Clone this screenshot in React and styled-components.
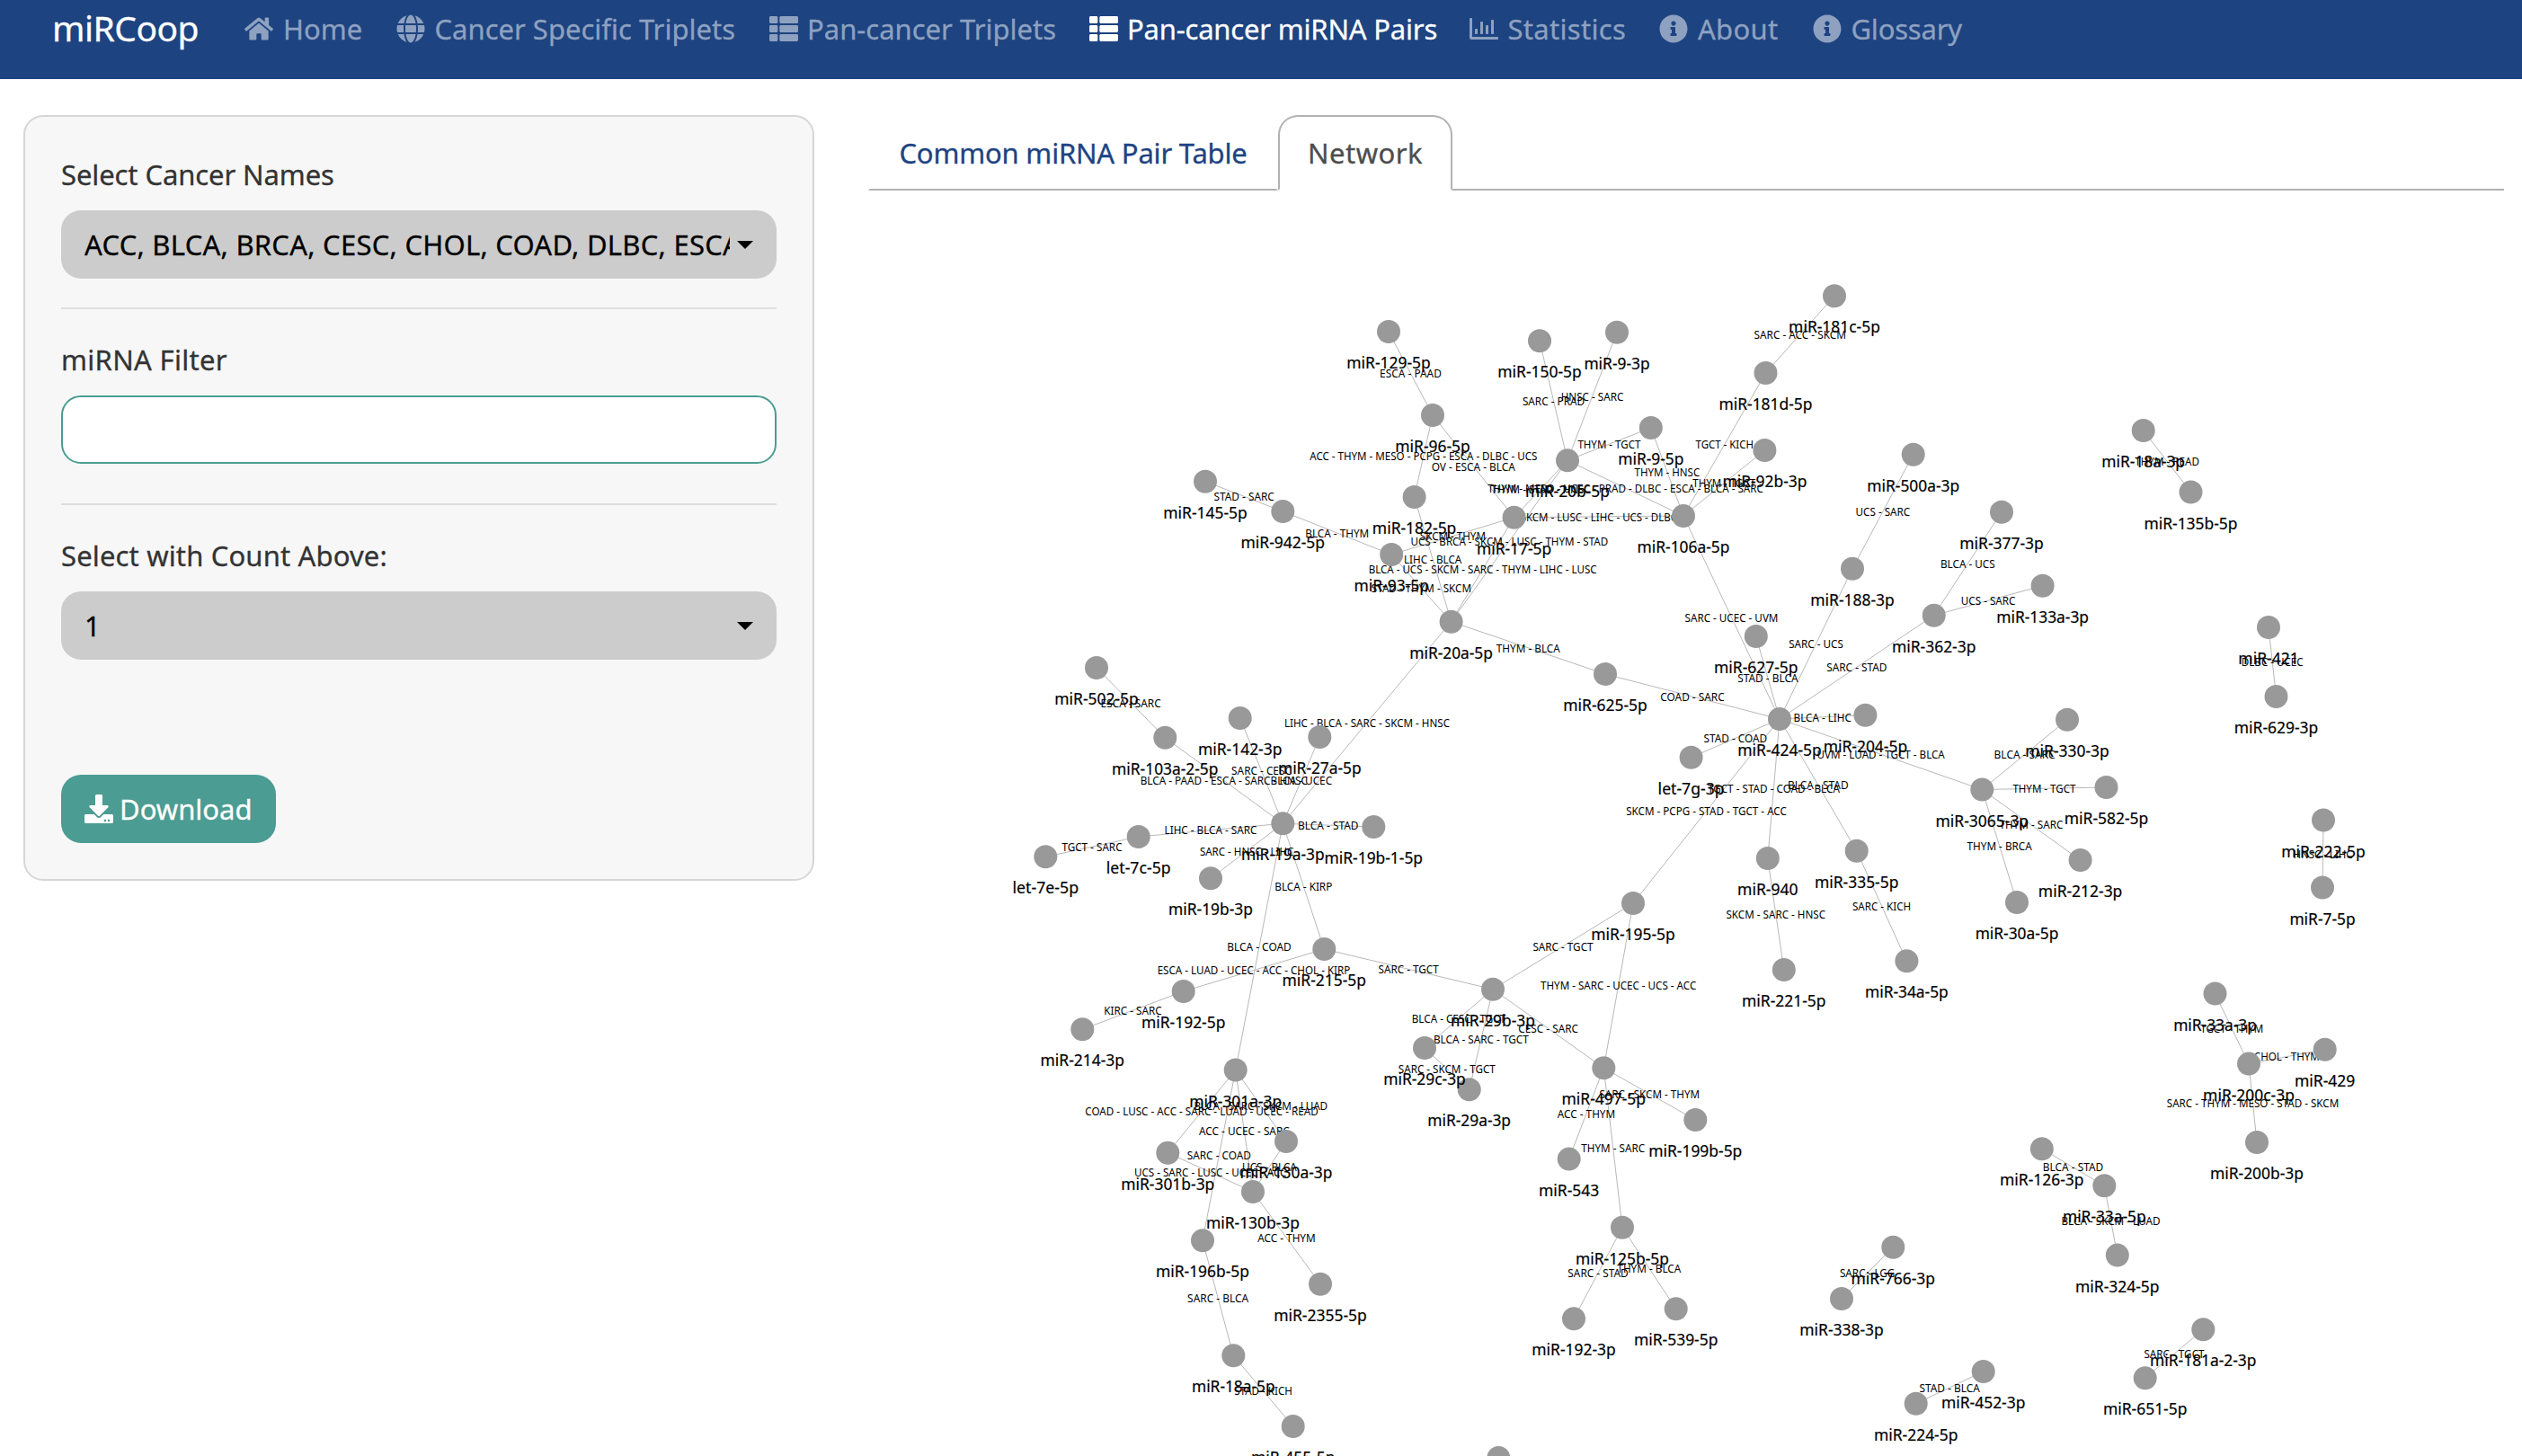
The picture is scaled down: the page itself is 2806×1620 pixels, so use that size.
import React from "react";
import styled, { createGlobalStyle } from "styled-components";
import { FaHome, FaGlobe, FaThList, FaRegChartBar, FaInfoCircle, FaDownload } from "react-icons/fa";

const GlobalStyle = createGlobalStyle`
  * { box-sizing: border-box; }
  body {
    margin: 0;
    overflow: hidden;
    background: #fff;
    color: #333;
    font-family: "Noto Sans", "Open Sans", sans-serif;
    font-size: 31px;
    line-height: 48px;
    -webkit-text-stroke: 0.3px currentColor;
  }
`;

const Page = styled.div`
  height: 1620px;
  overflow: hidden;
`;

const Navbar = styled.nav`
  display: flex;
  height: 88px;
  padding: 8px 0 0 58px;
  background: #1d4381;
  white-space: nowrap;
`;

const Brand = styled.span`
  width: 214px;
  height: 46px;
  line-height: 46px;
  font-size: 39px;
  letter-spacing: -0.5px;
  color: #fff;
`;

const NavItem = styled.a`
  display: flex;
  align-items: center;
  gap: ${(p) => p.$gap || 11}px;
  width: ${(p) => p.$width}px;
  height: 48px;
  color: ${(p) => (p.$active ? "#fff" : "#8ea1c0")};
  letter-spacing: ${(p) => p.$spacing || 0}px;

  svg {
    flex: none;
    width: auto;
    height: 32px;
  }
`;

const Content = styled.main`
  display: flex;
  align-items: flex-start;
  gap: 60px;
  padding: 40px 20px 0 26px;
`;

const Sidebar = styled.aside`
  display: flex;
  flex-direction: column;
  width: 880px;
  height: 852px;
  padding: 40px;
  border: 2px solid #d6d6d6;
  border-radius: 22px;
  background: #f7f7f7;
`;

const Label = styled.label`
  margin-bottom: 16px;
  letter-spacing: ${(p) => p.$spacing || 0}px;
  white-space: nowrap;
`;

const Picker = styled.button`
  display: flex;
  align-items: center;
  gap: 8px;
  height: 76px;
  padding: 0 26px;
  border: 0;
  border-radius: 22px;
  background: #ccc;
  color: #000;
  font: inherit;
  letter-spacing: 0.25px;
  text-align: left;
`;

const PickerValue = styled.span`
  flex: 1;
  min-width: 0;
  overflow: hidden;
  white-space: nowrap;
`;

const Caret = styled.i`
  border: 9px solid transparent;
  border-top-color: #000;
  border-bottom: 0;
`;

const Rule = styled.hr`
  width: 100%;
  height: 2px;
  margin: ${(p) => p.$top}px 0 32px;
  border: 0;
  background: #dedede;
`;

const TextField = styled.input`
  height: 76px;
  padding: 0 24px;
  border: 2px solid #4a9c92;
  border-radius: 22px;
  background: #fff;
  font: inherit;
  outline: none;
`;

const DownloadButton = styled.button`
  display: flex;
  align-items: center;
  align-self: flex-start;
  gap: 7px;
  width: 239px;
  height: 76px;
  margin-top: 128px;
  padding: 0 0 0 26px;
  border: 0;
  border-radius: 22px;
  background: #4b9c92;
  color: #fff;
  font: inherit;

  svg {
    flex: none;
    width: 32px;
    height: 32px;
  }
`;

const Panel = styled.section`
  display: flex;
  flex-direction: column;
  width: 1820px;
`;

const Tabs = styled.div`
  display: flex;
  height: 84px;
`;

const Tab = styled.a`
  display: flex;
  align-items: center;
  justify-content: center;
  width: ${(p) => p.$width}px;
  border: 2px solid ${(p) => (p.$active ? "#b2b2b2" : "transparent")};
  border-bottom-color: ${(p) => (p.$active ? "#fff" : "#b2b2b2")};
  border-radius: ${(p) => (p.$active ? "22px 22px 0 0" : "0")};
  color: ${(p) => (p.$active ? "#4d4d4d" : "#1d4381")};
  letter-spacing: ${(p) => p.$spacing || 0}px;
  white-space: nowrap;
`;

const TabsFill = styled.div`
  flex: 1;
  border-bottom: 2px solid #b2b2b2;
`;

const Graph = styled.svg`
  display: block;
  width: 1820px;
  height: 1408px;
  -webkit-text-stroke: 0;
`;

const EdgeLine = styled.line`
  stroke: #b8b8b8;
  stroke-width: 1;
`;

const EdgeText = styled.text`
  font-size: 11.7px;
  fill: #000;
  text-anchor: middle;
`;

const NodeDot = styled.circle`
  fill: #999;
`;

const NodeText = styled.text`
  font-size: 17.4px;
  fill: #000;
  stroke: #000;
  stroke-width: 0.2px;
  text-anchor: middle;
`;

const nodes = {
  "miR-129-5p": [1545, 369],
  "miR-150-5p": [1713, 379.3],
  "miR-9-3p": [1799, 369.7],
  "miR-96-5p": [1594, 462],
  "miR-20b-5p": [1744, 512.3],
  "miR-9-5p": [1836.8, 476],
  "miR-145-5p": [1341, 535.7],
  "miR-942-5p": [1427.3, 569],
  "miR-182-5p": [1573.6, 553],
  "miR-17-5p": [1684.6, 575.7],
  "miR-93-5p": [1548.2, 617],
  "miR-20a-5p": [1614.6, 691.7],
  "miR-625-5p": [1786, 750],
  "miR-181c-5p": [2041, 329.3],
  "miR-181d-5p": [1964.5, 415],
  "miR-92b-3p": [1963.4, 501],
  "miR-500a-3p": [2128.7, 505.7],
  "miR-106a-5p": [1873, 574],
  "miR-377-3p": [2227, 569.7],
  "miR-133a-3p": [2272.6, 651.7],
  "miR-188-3p": [2061, 632.7],
  "miR-362-3p": [2151.7, 684.7],
  "miR-627-5p": [1953.8, 708],
  "miR-18a-3p": [2384.7, 479],
  "miR-135b-5p": [2437.5, 547.5],
  "miR-421": [2524, 698],
  "miR-629-3p": [2532.5, 775],
  "miR-222-5p": [2585, 912.5],
  "miR-7-5p": [2584, 987.5],
  "miR-502-5p": [1220, 743],
  "miR-103a-2-5p": [1296.3, 820.8],
  "miR-142-3p": [1379.7, 799],
  "miR-27a-5p": [1468.3, 820],
  "miR-19a-3p": [1427.3, 916.3],
  "miR-19b-1-5p": [1528.3, 920],
  "let-7c-5p": [1266.7, 931],
  "let-7e-5p": [1163.3, 953.3],
  "miR-19b-3p": [1347, 977.3],
  "miR-215-5p": [1473.3, 1056],
  "miR-192-5p": [1316.7, 1103],
  "miR-214-3p": [1204.3, 1145.3],
  "miR-301a-3p": [1374.7, 1190.5],
  "miR-301b-3p": [1299.3, 1282.7],
  "miR-130a-3p": [1431, 1270],
  "miR-130b-3p": [1394, 1326],
  "miR-196b-5p": [1338, 1380.3],
  "miR-2355-5p": [1469, 1428.7],
  "miR-18a-5p": [1372.3, 1508.3],
  "miR-455-5p": [1438.7, 1587],
  "miR-424-5p": [1980, 800],
  "miR-204-5p": [2075.4, 795.7],
  "let-7g-3p": [1881.6, 842.7],
  "miR-330-3p": [2300, 800.7],
  "miR-582-5p": [2343.5, 876],
  "miR-3065-3p": [2205.3, 878.5],
  "miR-212-3p": [2314.6, 957],
  "miR-30a-5p": [2244, 1004],
  "miR-940": [1966.8, 955],
  "miR-335-5p": [2065.7, 946.7],
  "miR-34a-5p": [2121.4, 1069.3],
  "miR-221-5p": [1984.8, 1079],
  "miR-195-5p": [1817, 1005],
  "miR-29b-3p": [1661, 1100.7],
  "miR-29c-3p": [1585, 1166],
  "miR-29a-3p": [1634.7, 1212.3],
  "miR-497-5p": [1784.3, 1188.2],
  "miR-199b-5p": [1886.3, 1246],
  "miR-543": [1745.7, 1289.6],
  "miR-125b-5p": [1805, 1365.7],
  "miR-539-5p": [1864.7, 1456.3],
  "miR-192-3p": [1751, 1467.3],
  "miR-33a-3p": [2464.5, 1105.5],
  "miR-429": [2586.7, 1167.7],
  "miR-200c-3p": [2502, 1183.6],
  "miR-200b-3p": [2511, 1271],
  "miR-126-3p": [2271.8, 1278.2],
  "miR-33a-5p": [2341.3, 1319.3],
  "miR-324-5p": [2355.8, 1396.6],
  "miR-181a-2-3p": [2451.3, 1479.3],
  "miR-651-5p": [2386.7, 1533.2],
  "miR-766-3p": [2106.3, 1387.7],
  "miR-338-3p": [2049, 1445],
  "miR-452-3p": [2206.7, 1526],
  "miR-224-5p": [2131.7, 1561.7],
};

const edges = [
  ["miR-129-5p", "miR-96-5p", "ESCA - PAAD"],
  ["miR-96-5p", "miR-182-5p", "ACC - THYM - MESO - PCPG - ESCA - DLBC - UCS"],
  ["miR-96-5p", "miR-17-5p", "OV - ESCA - BLCA"],
  ["miR-150-5p", "miR-20b-5p", "SARC - PRAD"],
  ["miR-9-3p", "miR-20b-5p", "HNSC - SARC"],
  ["miR-20b-5p", "miR-9-5p", "THYM - TGCT"],
  ["miR-9-5p", "miR-106a-5p", "THYM - HNSC"],
  ["miR-181c-5p", "miR-181d-5p", "SARC - ACC - SKCM"],
  ["miR-181d-5p", "miR-106a-5p", "TGCT - KICH"],
  ["miR-92b-3p", "miR-106a-5p", "THYM - TGCT"],
  ["miR-20b-5p", "miR-106a-5p", "THYM - MESO - UCEC - PRAD - DLBC - ESCA - BLCA - SARC"],
  ["miR-20b-5p", "miR-17-5p", "THYM - STAD - HNSC"],
  ["miR-20b-5p", "miR-20a-5p", "UCS - BRCA - SKCM - LUSC - THYM - STAD"],
  ["miR-17-5p", "miR-20a-5p", "BLCA - UCS - SKCM - SARC - THYM - LIHC - LUSC"],
  ["miR-17-5p", "miR-93-5p", "SKCM - THYM"],
  ["miR-17-5p", "miR-106a-5p", "SKCM - LUSC - LIHC - UCS - DLBC"],
  ["miR-182-5p", "miR-20a-5p", "LIHC - BLCA"],
  ["miR-93-5p", "miR-20a-5p", "STAD - THYM - SKCM"],
  ["miR-942-5p", "miR-93-5p", "BLCA - THYM"],
  ["miR-145-5p", "miR-942-5p", "STAD - SARC"],
  ["miR-20a-5p", "miR-625-5p", "THYM - BLCA"],
  ["miR-625-5p", "miR-424-5p", "COAD - SARC"],
  ["miR-106a-5p", "miR-424-5p", "SARC - UCEC - UVM"],
  ["miR-627-5p", "miR-424-5p", "STAD - BLCA"],
  ["miR-188-3p", "miR-424-5p", "SARC - UCS"],
  ["miR-500a-3p", "miR-188-3p", "UCS - SARC"],
  ["miR-377-3p", "miR-362-3p", "BLCA - UCS"],
  ["miR-133a-3p", "miR-362-3p", "UCS - SARC"],
  ["miR-362-3p", "miR-424-5p", "SARC - STAD"],
  ["miR-204-5p", "miR-424-5p", "BLCA - LIHC"],
  ["let-7g-3p", "miR-424-5p", "STAD - COAD"],
  ["miR-424-5p", "miR-3065-3p", "UVM - LUAD - TGCT - BLCA"],
  ["miR-424-5p", "miR-940", "TGCT - STAD - COAD - BLCA"],
  ["miR-424-5p", "miR-335-5p", "BLCA - STAD"],
  ["miR-424-5p", "miR-195-5p", "SKCM - PCPG - STAD - TGCT - ACC"],
  ["miR-940", "miR-221-5p", "SKCM - SARC - HNSC"],
  ["miR-335-5p", "miR-34a-5p", "SARC - KICH"],
  ["miR-330-3p", "miR-3065-3p", "BLCA - SARC"],
  ["miR-3065-3p", "miR-582-5p", "THYM - TGCT"],
  ["miR-3065-3p", "miR-212-3p", "THYM - SARC"],
  ["miR-3065-3p", "miR-30a-5p", "THYM - BRCA"],
  ["miR-195-5p", "miR-29b-3p", "SARC - TGCT"],
  ["miR-195-5p", "miR-497-5p", "THYM - SARC - UCEC - UCS - ACC"],
  ["miR-29b-3p", "miR-497-5p", "CESC - SARC"],
  ["miR-215-5p", "miR-29b-3p", "SARC - TGCT"],
  ["miR-29b-3p", "miR-29c-3p", "BLCA - CESC - TGCT"],
  ["miR-29b-3p", "miR-29a-3p", "BLCA - SARC - TGCT"],
  ["miR-29c-3p", "miR-29a-3p", "SARC - SKCM - TGCT"],
  ["miR-497-5p", "miR-199b-5p", "SARC - SKCM - THYM"],
  ["miR-497-5p", "miR-543", "ACC - THYM"],
  ["miR-497-5p", "miR-125b-5p", "THYM - SARC"],
  ["miR-125b-5p", "miR-192-3p", "SARC - STAD"],
  ["miR-125b-5p", "miR-539-5p", "THYM - BLCA"],
  ["miR-20a-5p", "miR-19a-3p", "LIHC - BLCA - SARC - SKCM - HNSC"],
  ["miR-502-5p", "miR-103a-2-5p", "ESCA - SARC"],
  ["miR-103a-2-5p", "miR-19a-3p", "BLCA - PAAD - ESCA - SARC - HNSC"],
  ["miR-142-3p", "miR-19a-3p", "SARC - CESC"],
  ["miR-27a-5p", "miR-19a-3p", "BLCA - UCEC"],
  ["miR-19a-3p", "miR-19b-1-5p", "BLCA - STAD"],
  ["let-7c-5p", "miR-19a-3p", "LIHC - BLCA - SARC"],
  ["let-7e-5p", "let-7c-5p", "TGCT - SARC"],
  ["miR-19a-3p", "miR-19b-3p", "SARC - HNSC - LIHC"],
  ["miR-19a-3p", "miR-215-5p", "BLCA - KIRP"],
  ["miR-19a-3p", "miR-301a-3p", "BLCA - COAD"],
  ["miR-215-5p", "miR-192-5p", "ESCA - LUAD - UCEC - ACC - CHOL - KIRP"],
  ["miR-192-5p", "miR-214-3p", "KIRC - SARC"],
  ["miR-301a-3p", "miR-301b-3p", "COAD - LUSC - ACC - SARC - LUAD - UCEC - READ"],
  ["miR-301a-3p", "miR-130a-3p", "BLCA - SARC - SKCM - LUAD"],
  ["miR-301a-3p", "miR-130b-3p", "ACC - UCEC - SARC"],
  ["miR-301a-3p", "miR-196b-5p", "SARC - COAD"],
  ["miR-301b-3p", "miR-130b-3p", "UCS - SARC - LUSC - UCEC - ACC"],
  ["miR-130a-3p", "miR-130b-3p", "UCS - BLCA"],
  ["miR-130b-3p", "miR-2355-5p", "ACC - THYM"],
  ["miR-196b-5p", "miR-18a-5p", "SARC - BLCA"],
  ["miR-18a-5p", "miR-455-5p", "STAD - KICH"],
  ["miR-18a-3p", "miR-135b-5p", "THYM - READ"],
  ["miR-421", "miR-629-3p", "DLBC - UCEC"],
  ["miR-222-5p", "miR-7-5p", "HNSC - LIHC"],
  ["miR-33a-3p", "miR-200c-3p", "TGCT - THYM"],
  ["miR-200c-3p", "miR-429", "CHOL - THYM"],
  ["miR-200c-3p", "miR-200b-3p", "SARC - THYM - MESO - STAD - SKCM"],
  ["miR-126-3p", "miR-33a-5p", "BLCA - STAD"],
  ["miR-33a-5p", "miR-324-5p", "BLCA - SKCM - LUAD"],
  ["miR-181a-2-3p", "miR-651-5p", "SARC - TGCT"],
  ["miR-766-3p", "miR-338-3p", "SARC - LGG"],
  ["miR-452-3p", "miR-224-5p", "STAD - BLCA"],
];

// Advance widths, in thousandths of an em, used to size the graph labels.
const advances = {
  " ": 230, "-": 300, A: 660, B: 640, C: 630, D: 680, E: 560, F: 530, G: 690, H: 710, I: 270,
  K: 620, L: 530, M: 870, N: 730, O: 760, P: 590, R: 630, S: 530, T: 530, U: 680, V: 640, Y: 580,
  a: 520, b: 587, c: 460, d: 587, e: 560, g: 580, i: 250, l: 265, m: 870, p: 587, t: 390,
};
const labelWidth = (text, size) =>
  ([...text].reduce((sum, ch) => sum + (advances[ch] || 564), 0) * size) / 1000;

const Network = () => (
  <Graph viewBox="966 212 1820 1408">
    {edges.map(([a, b]) => (
      <EdgeLine key={a + b} x1={nodes[a][0]} y1={nodes[a][1]} x2={nodes[b][0]} y2={nodes[b][1]} />
    ))}
    {edges.map(([a, b, text]) => (
      <EdgeText
        key={a + b}
        x={(nodes[a][0] + nodes[b][0]) / 2}
        y={(nodes[a][1] + nodes[b][1]) / 2 + 4.7}
        textLength={labelWidth(text, 12)}
        lengthAdjust="spacingAndGlyphs"
      >
        {text}
      </EdgeText>
    ))}
    {Object.entries(nodes).map(([name, [x, y]]) => (
      <NodeDot key={name} cx={x} cy={y} r="13" />
    ))}
    <NodeDot cx="1667.3" cy="1622" r="13" />
    {Object.entries(nodes).map(([name, [x, y]]) => (
      <NodeText key={name} x={x} y={y + 41} textLength={labelWidth(name, 18)} lengthAdjust="spacingAndGlyphs">
        {name}
      </NodeText>
    ))}
  </Graph>
);

export default function App() {
  return (
    <Page>
      <GlobalStyle />
      <Navbar>
        <Brand>miRCoop</Brand>
        <NavItem $width={168.5}><FaHome />Home</NavItem>
        <NavItem $width={415.5}><FaGlobe />Cancer Specific Triplets</NavItem>
        <NavItem $width={356} $gap={10}><FaThList />Pan-cancer Triplets</NavItem>
        <NavItem $width={422.5} $gap={10} $spacing={-0.2} $active><FaThList />Pan-cancer miRNA Pairs</NavItem>
        <NavItem $width={211.5} $spacing={0.3}><FaRegChartBar />Statistics</NavItem>
        <NavItem $width={170.5} $spacing={0.3}><FaInfoCircle />About</NavItem>
        <NavItem $width={170} $spacing={-0.2}><FaInfoCircle />Glossary</NavItem>
      </Navbar>
      <Content>
        <Sidebar>
          <Label $spacing={-0.1}>Select Cancer Names</Label>
          <Picker>
            <PickerValue>ACC, BLCA, BRCA, CESC, CHOL, COAD, DLBC, ESCA, GBM, HNSC</PickerValue>
            <Caret />
          </Picker>
          <Rule $top={32} />
          <Label $spacing={0.3}>miRNA Filter</Label>
          <TextField />
          <Rule $top={44} />
          <Label $spacing={0.15}>Select with Count Above:</Label>
          <Picker>
            <PickerValue>1</PickerValue>
            <Caret />
          </Picker>
          <DownloadButton><FaDownload />Download</DownloadButton>
        </Sidebar>
        <Panel>
          <Tabs>
            <Tab $width={456} $spacing={-0.2}>Common miRNA Pair Table</Tab>
            <Tab $width={194} $spacing={0.5} $active>Network</Tab>
            <TabsFill />
          </Tabs>
          <Network />
        </Panel>
      </Content>
    </Page>
  );
}
